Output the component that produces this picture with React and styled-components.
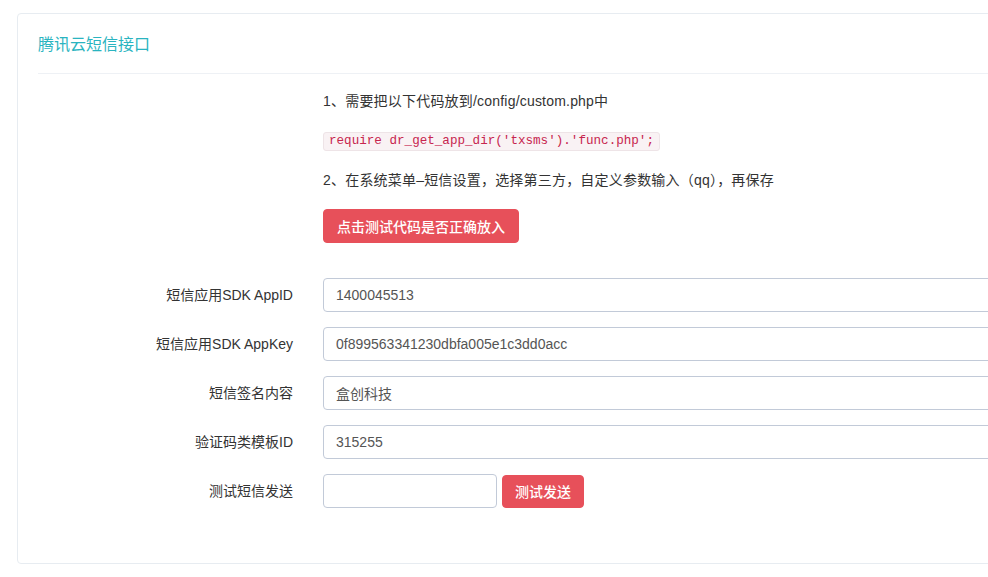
import React from 'react'
import styled, { createGlobalStyle } from 'styled-components'

const GlobalStyle = createGlobalStyle`
  html, body {
    margin: 0;
    background: #fff;
    overflow: hidden;
  }
  body {
    font-family: "Liberation Sans", "Noto Sans CJK SC", sans-serif;
    font-size: 14px;
    color: #333;
  }
`

// Form fields shown under the instructions
const fields = [
  { label: '短信应用SDK AppID', value: '1400045513' },
  { label: '短信应用SDK AppKey', value: '0f899563341230dbfa005e1c3dd0acc' },
  { label: '短信签名内容', value: '盒创科技' },
  { label: '验证码类模板ID', value: '315255' },
]

const Page = styled.div`
  padding: 13px 0 0 17px;
`

const Portlet = styled.div`
  width: 1200px;
  border: 1px solid #e7ecf1;
  border-radius: 4px;
  padding: 0 20px;
`

const Title = styled.div`
  padding: 22px 0 19px;
  line-height: 18px;
  font-size: 16px;
  color: #2ab4c0;
  border-bottom: 1px solid #eef1f5;
`

const Body = styled.div`
  padding: 17px 0 55px;
`

const Intro = styled.div`
  margin-left: 285px;
  margin-bottom: 35px;
`

const Line = styled.p`
  margin: 0 0 ${(p) => p.$gap || 20}px;
  line-height: 20px;
  letter-spacing: 0.2px;
`

const CodeRow = styled.div`
  margin-bottom: 20px;
  height: 19px;
`

const Code = styled.code`
  display: inline-block;
  box-sizing: border-box;
  height: 19px;
  line-height: 17px;
  padding: 0 5px;
  font-family: "Liberation Mono", monospace;
  font-size: 12.6px;
  color: #c7254e;
  background: #f9f2f4;
  border: 1px solid #eee4e7;
  border-radius: 3px;
`

const Button = styled.button`
  box-sizing: border-box;
  height: ${(p) => p.$h || 34}px;
  padding: 0 ${(p) => p.$pad || 12}px;
  font-family: inherit;
  font-size: 14px;
  font-weight: 500;
  color: #fff;
  background: #e7505a;
  border: 1px solid #e7505a;
  border-radius: 4px;
  cursor: pointer;
`

const Form = styled.div`
  display: flex;
  flex-direction: column;
  gap: 15px;
`

const Row = styled.div`
  display: grid;
  grid-template-columns: 255px 1fr;
  column-gap: 30px;
  align-items: center;
`

const Label = styled.label`
  text-align: right;
  line-height: 34px;
  color: #333;
`

const Input = styled.input`
  box-sizing: border-box;
  width: ${(p) => p.$w || '100%'};
  height: 34px;
  padding: 0 12px;
  font-family: inherit;
  font-size: 14px;
  color: #555;
  border: 1px solid #c2cad8;
  border-radius: 4px;
  outline: none;
`

const Inline = styled.div`
  display: flex;
  align-items: center;
  gap: 5px;
`

export default function App() {
  return (
    <Page>
      <GlobalStyle />
      <Portlet>
        <Title>腾讯云短信接口</Title>
        <Body>
          <Intro>
            <Line>1、需要把以下代码放到/config/custom.php中</Line>
            <CodeRow>
              <Code>require dr_get_app_dir('txsms').'func.php';</Code>
            </CodeRow>
            <Line $gap={19}>2、在系统菜单–短信设置，选择第三方，自定义参数输入（qq），再保存</Line>
            <Button $pad={13}>点击测试代码是否正确放入</Button>
          </Intro>
          <Form>
            {fields.map(({ label, value }) => (
              <Row key={label}>
                <Label>{label}</Label>
                <Input defaultValue={value} />
              </Row>
            ))}
            <Row>
              <Label>测试短信发送</Label>
              <Inline>
                <Input $w="174px" />
                <Button $h={33}>测试发送</Button>
              </Inline>
            </Row>
          </Form>
        </Body>
      </Portlet>
    </Page>
  )
}
